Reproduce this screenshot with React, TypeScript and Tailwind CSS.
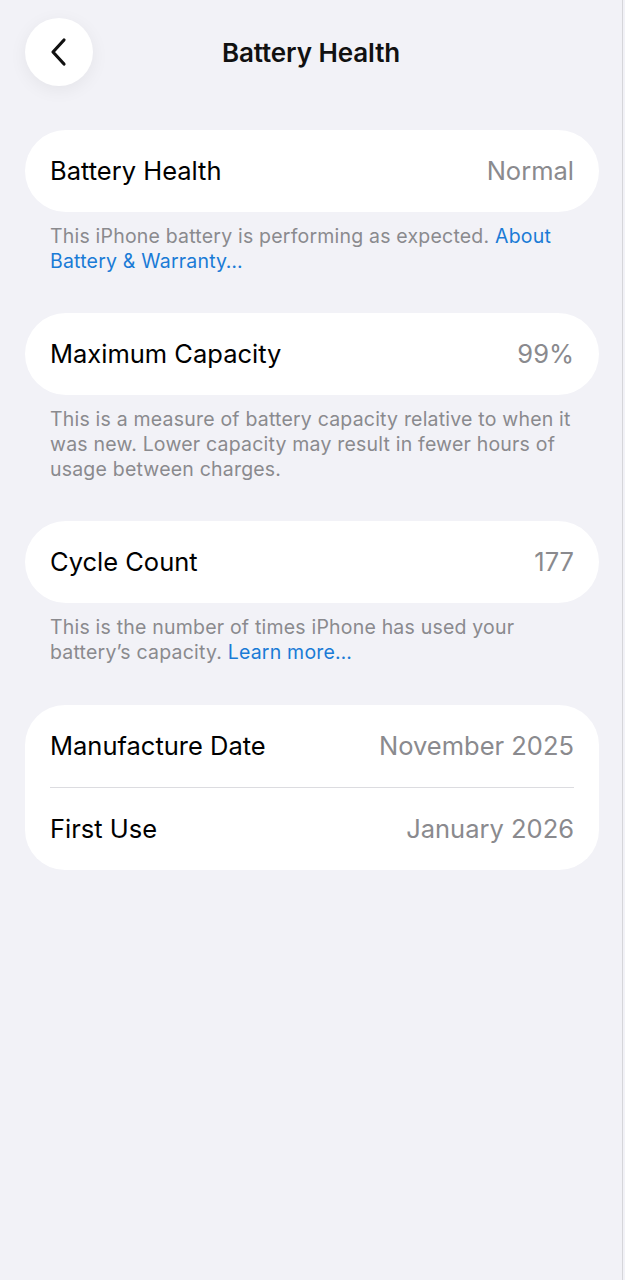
import React from 'react';

const font = { fontFamily: 'Inter, "Noto Sans", sans-serif' };

function Row({ label, value }: { label: string; value: string }) {
  return (
    <div className="flex h-[82px] items-center justify-between px-[25px]">
      <span className="text-[25.5px] tracking-[0px] text-black">{label}</span>
      <span className="text-[25.5px] tracking-[0px] text-[#8a8a8e]">{value}</span>
    </div>
  );
}

function Footer({ children }: { children: React.ReactNode }) {
  return (
    <p className="px-[25px] pt-[12px] pb-[39px] text-[19.5px] leading-[25px] tracking-[0.2px] text-[#8a8a8e]">
      {children}
    </p>
  );
}

export default function App() {
  return (
    <div className="min-h-[1280px] w-full bg-[#f2f2f7]" style={font}>
      <div className="min-h-[1280px] w-[623px] border-r border-[#d6d6da]">
        {/* nav bar */}
        <div className="relative flex h-[130px] items-start">
          <button className="ml-[25px] mt-[18px] flex h-[68px] w-[68px] items-center justify-center rounded-full bg-white shadow-[0_4px_18px_rgba(0,0,0,0.06)]">
            <svg width="24" height="32" viewBox="0 0 24 32" fill="none">
              <path d="M17 4 L6 16 L17 28" stroke="#111" strokeWidth="3.2" strokeLinecap="round" strokeLinejoin="round" />
            </svg>
          </button>
          <h1 className="absolute left-0 right-0 top-[33px] text-center text-[26px] font-semibold tracking-[-0.1px] text-[#111]">
            Battery Health
          </h1>
        </div>

        <div className="pl-[25px] pr-[23px]">
          <div className="rounded-full bg-white">
            <Row label="Battery Health" value="Normal" />
          </div>
          <Footer>
            This iPhone battery is performing as expected.{' '}
            <span className="text-[#1a7bd6]">About Battery &amp; Warranty…</span>
          </Footer>

          <div className="rounded-full bg-white">
            <Row label="Maximum Capacity" value="99%" />
          </div>
          <Footer>
            This is a measure of battery capacity relative to when it was new. Lower capacity may result in fewer hours of usage between charges.
          </Footer>

          <div className="rounded-full bg-white">
            <Row label="Cycle Count" value="177" />
          </div>
          <Footer>
            This is the number of times iPhone has used your battery’s capacity.{' '}
            <span className="text-[#1a7bd6]">Learn more…</span>
          </Footer>

          <div className="mt-px rounded-[40px] bg-white">
            <Row label="Manufacture Date" value="November 2025" />
            <div className="mx-[25px] h-px bg-[#dcdce0]" />
            <Row label="First Use" value="January 2026" />
          </div>
        </div>
      </div>
    </div>
  );
}
